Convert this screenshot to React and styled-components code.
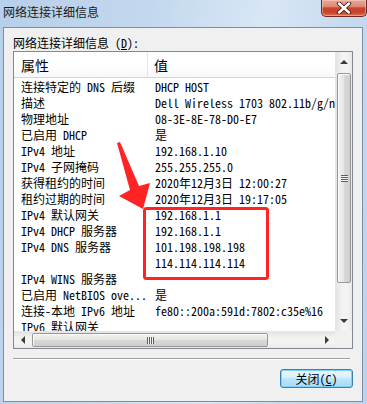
import styled, { createGlobalStyle } from "styled-components";

const GlobalStyle = createGlobalStyle`
  html, body {
    margin: 0;
    padding: 0;
    background: #ffffff;
  }
  body {
    font-family: "Noto Sans Mono CJK SC", "Noto Sans CJK SC", "Liberation Mono", monospace;
    font-size: 12px;
    color: #000;
  }
`;

const rows = [
  ["连接特定的 DNS 后缀", "DHCP HOST"],
  ["描述", "Dell Wireless 1703 802.11b/g/n"],
  ["物理地址", "08-3E-8E-78-D0-E7"],
  ["已启用 DHCP", "是"],
  ["IPv4 地址", "192.168.1.10"],
  ["IPv4 子网掩码", "255.255.255.0"],
  ["获得租约的时间", "2020年12月3日 12:00:27"],
  ["租约过期的时间", "2020年12月3日 19:17:05"],
  ["IPv4 默认网关", "192.168.1.1"],
  ["IPv4 DHCP 服务器", "192.168.1.1"],
  ["IPv4 DNS 服务器", "101.198.198.198"],
  ["", "114.114.114.114"],
  ["IPv4 WINS 服务器", ""],
  ["已启用 NetBIOS ove...", "是"],
  ["连接-本地 IPv6 地址", "fe80::200a:591d:7802:c35e%16"],
  ["IPv6 默认网关", ""],
];

const Arrow = ({ dir }) => {
  const pts = {
    up: "4,2 0,6 8,6",
    down: "0,2 8,2 4,6",
    left: "6,0 6,8 2,4",
    right: "2,0 2,8 6,4",
  };
  return (
    <svg width="8" height="8" viewBox="0 0 8 8">
      <polygon points={pts[dir]} fill="#3a3a3a" />
    </svg>
  );
};

const App = () => (
  <>
    <GlobalStyle />
    <Window>
      <TitleBar>
        <Title>网络连接详细信息</Title>
        <CloseButton>
          <svg width="16" height="12" viewBox="0 0 16 12">
            <path
              d="M3 1.5 L13 10.5 M13 1.5 L3 10.5"
              stroke="#3b1a14"
              strokeWidth="4.2"
              strokeLinecap="round"
            />
            <path
              d="M3 1.5 L13 10.5 M13 1.5 L3 10.5"
              stroke="#ffffff"
              strokeWidth="2.4"
              strokeLinecap="round"
            />
          </svg>
        </CloseButton>
      </TitleBar>

      <Client>
        <Label>
          网络连接详细信息 (<u>D</u>):
        </Label>

        <ListBox>
          <ListArea>
            <Header>
              <HeadCell $first>属性</HeadCell>
              <HeadCell>值</HeadCell>
            </Header>
            <Rows>
              {rows.map(([name, value], i) => (
                <Row key={i}>
                  <NameCell>{name}</NameCell>
                  <ValueCell>{value}</ValueCell>
                </Row>
              ))}
            </Rows>
          </ListArea>

          <VScroll>
            <VButton>
              <Arrow dir="up" />
            </VButton>
            <VTrack>
              <VThumb $offset={1} $size={210}>
                <VGrip />
              </VThumb>
            </VTrack>
            <VButton>
              <Arrow dir="down" />
            </VButton>
          </VScroll>

          <HScroll>
            <HButton>
              <Arrow dir="left" />
            </HButton>
            <HTrack>
              <HThumb $offset={1} $size={236}>
                <HGrip />
              </HThumb>
            </HTrack>
            <HButton>
              <Arrow dir="right" />
            </HButton>
          </HScroll>
          <Corner />
        </ListBox>

        <Separator />

        <ButtonRow>
          <DialogButton>
            关闭(<u>C</u>)
          </DialogButton>
        </ButtonRow>
      </Client>

      <Annotation viewBox="0 0 367 404" width="367" height="404">
        <rect
          x="144.5"
          y="208.5"
          width="123"
          height="70"
          rx="2"
          fill="none"
          stroke="#ff2323"
          strokeWidth="3"
        />
        <polygon
          points="117,143 120,142 139,186 150,183 143,209 119,196 130,190"
          fill="#ff2323"
        />
      </Annotation>
    </Window>
  </>
);

export default App;

const Window = styled.div`
  position: relative;
  width: 367px;
  height: 404px;
  box-sizing: border-box;
  display: flex;
  flex-direction: column;
  padding: 0 4px 2px 3px;
  background: linear-gradient(
    100deg,
    #b7cfe9 0%,
    #c3d8ee 35%,
    #d9e7f5 62%,
    #c6daef 80%,
    #bcd3eb 100%
  );
  overflow: hidden;
`;

const TitleBar = styled.div`
  height: 27px;
  flex-shrink: 0;
  display: flex;
  justify-content: space-between;
  align-items: flex-start;
`;

const Title = styled.div`
  font-family: "Noto Sans CJK SC", sans-serif;
  font-size: 12px;
  line-height: 16px;
  padding-top: 4px;
  color: #1a1a1a;
`;

const CloseButton = styled.div`
  width: 46px;
  height: 17px;
  box-sizing: border-box;
  margin-right: -4px;
  display: flex;
  align-items: center;
  justify-content: center;
  border: 1px solid #6e2a20;
  border-top: none;
  border-radius: 0 0 5px 5px;
  background: linear-gradient(
    to bottom,
    #e9a898 0%,
    #df8a76 40%,
    #c9452e 50%,
    #c7432c 75%,
    #d9704f 100%
  );
  box-shadow: inset 0 0 0 1px rgba(255, 220, 210, 0.45);
`;

const Client = styled.div`
  flex: 1;
  display: flex;
  flex-direction: column;
  background: #f0f0f0;
  border: 1px solid #7b8ea5;
  padding: 7px 9px 0 9px;
`;

const Label = styled.div`
  line-height: 16px;
  height: 16px;
  white-space: nowrap;
  u {
    text-decoration: underline;
  }
`;

const ListBox = styled.div`
  width: 340px;
  height: 298px;
  box-sizing: border-box;
  border: 1px solid #828790;
  background: #ffffff;
  display: grid;
  grid-template-columns: 1fr 17px;
  grid-template-rows: 1fr 17px;
  overflow: hidden;
`;

const ListArea = styled.div`
  overflow: hidden;
  min-width: 0;
`;

const Header = styled.div`
  height: 25px;
  display: flex;
  background: linear-gradient(to bottom, #ffffff 0%, #ffffff 50%, #f7f8f9 100%);
  border-bottom: 1px solid #d5d5d5;
`;

const HeadCell = styled.div`
  width: ${(p) => (p.$first ? "134px" : "auto")};
  flex: ${(p) => (p.$first ? "none" : "1")};
  box-sizing: border-box;
  padding: 3px 0 0 ${(p) => (p.$first ? "7px" : "6px")};
  font-size: 14px;
  line-height: 20px;
  font-family: "Noto Sans CJK SC", sans-serif;
  border-right: ${(p) => (p.$first ? "1px solid #e3e5e8" : "none")};
`;

const Rows = styled.div`
  padding-top: 1px;
`;

const Row = styled.div`
  display: flex;
  height: 16px;
  line-height: 16px;
  white-space: nowrap;
`;

const NameCell = styled.div`
  width: 134px;
  flex: none;
  box-sizing: border-box;
  padding-left: 7px;
  overflow: hidden;
`;

const ValueCell = styled.div`
  flex: 1;
  padding-left: 7px;
  overflow: hidden;
`;

const VScroll = styled.div`
  display: flex;
  flex-direction: column;
  background: linear-gradient(to right, #e4e4e4, #f3f3f3 40%, #f3f3f3 70%, #e8e8e8);
  border-left: 1px solid #e6e6e6;
`;

const VButton = styled.div`
  height: 20px;
  flex: none;
  display: flex;
  align-items: center;
  justify-content: center;
`;

const VTrack = styled.div`
  flex: 1;
  padding: 0 1px;
`;

const VThumb = styled.div`
  margin-top: ${(p) => p.$offset}px;
  height: ${(p) => p.$size}px;
  box-sizing: border-box;
  border: 1px solid #979797;
  border-radius: 2px;
  background: linear-gradient(to right, #f2f2f2, #e5e5e5 50%, #d8d8d8 52%, #cfcfcf);
  box-shadow: inset 1px 1px 0 #fbfbfb;
  display: flex;
  align-items: center;
  justify-content: center;
`;

const VGrip = styled.div`
  width: 7px;
  height: 7px;
  background: repeating-linear-gradient(
    to bottom,
    #5f5f5f 0px,
    #5f5f5f 1px,
    #f2f2f2 1px,
    #f2f2f2 2px
  );
`;

const HScroll = styled.div`
  display: flex;
  background: linear-gradient(to bottom, #e4e4e4, #f3f3f3 40%, #f3f3f3 70%, #e8e8e8);
  border-top: 1px solid #e6e6e6;
`;

const HButton = styled.div`
  width: 17px;
  flex: none;
  display: flex;
  align-items: center;
  justify-content: center;
`;

const HTrack = styled.div`
  flex: 1;
  padding: 1px 0;
  display: flex;
`;

const HThumb = styled.div`
  margin-left: ${(p) => p.$offset}px;
  width: ${(p) => p.$size}px;
  box-sizing: border-box;
  border: 1px solid #979797;
  border-radius: 2px;
  background: linear-gradient(to bottom, #f2f2f2, #e5e5e5 50%, #d8d8d8 52%, #cfcfcf);
  box-shadow: inset 1px 1px 0 #fbfbfb;
  display: flex;
  align-items: center;
  justify-content: center;
`;

const HGrip = styled.div`
  width: 7px;
  height: 7px;
  background: repeating-linear-gradient(
    to right,
    #5f5f5f 0px,
    #5f5f5f 1px,
    #f2f2f2 1px,
    #f2f2f2 2px
  );
`;

const Corner = styled.div`
  background: #f0f0f0;
`;

const Separator = styled.div`
  margin: 9px 3px 0 0;
  height: 1px;
  background: #a0a0a0;
  border-bottom: 1px solid #ffffff;
`;

const ButtonRow = styled.div`
  display: flex;
  justify-content: flex-end;
  margin-top: 9px;
`;

const DialogButton = styled.div`
  width: 73px;
  height: 19px;
  box-sizing: border-box;
  border: 1px solid #3c7fb1;
  border-radius: 3px;
  background: linear-gradient(
    to bottom,
    #eaf6fd 0%,
    #d9f0fc 45%,
    #bee6fd 50%,
    #a7d9f5 100%
  );
  box-shadow: inset 0 0 0 1px #7fd0f5;
  display: flex;
  align-items: center;
  justify-content: center;
  line-height: 16px;
  u {
    text-decoration: underline;
  }
`;

const Annotation = styled.svg`
  position: absolute;
  left: 0;
  top: 0;
  pointer-events: none;
`;
